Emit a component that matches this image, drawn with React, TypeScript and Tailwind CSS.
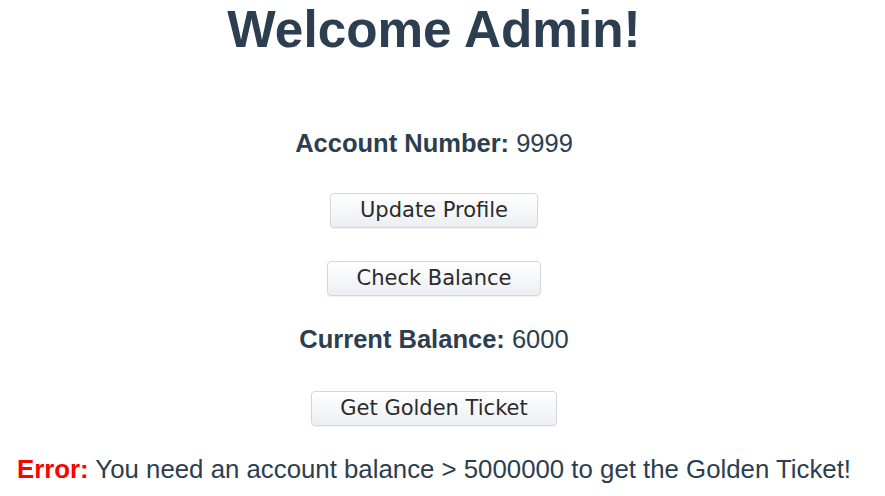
const buttonClass =
  "h-[35px] rounded-[4px] border border-[#d3d7dc] bg-gradient-to-b from-white to-[#eceff3] text-[21px] leading-none text-[#2b2b2b] shadow-[0_1px_1px_rgba(0,0,0,0.06)] font-['DejaVu_Sans',sans-serif]";

export default function App() {
  return (
    <div className="w-[868px] flex flex-col items-center text-[#2c3e50] font-['Liberation_Sans',Arial,sans-serif]">
      <h1 className="text-[51.3px] font-bold leading-[59px]">Welcome Admin!</h1>

      <p className="mt-[70px] text-[25.5px] leading-[29px]">
        <span className="font-bold">Account Number:</span> 9999
      </p>

      <button className={`mt-[35px] w-[208px] ${buttonClass}`}>Update Profile</button>

      <button className={`mt-[33px] w-[214px] ${buttonClass}`}>Check Balance</button>

      <p className="mt-[29px] text-[25.5px] leading-[29px]">
        <span className="font-bold">Current Balance:</span> 6000
      </p>

      <button className={`mt-[37px] w-[246px] ${buttonClass}`}>Get Golden Ticket</button>

      <p className="mt-[29px] text-[25.8px] leading-[29px]">
        <span className="font-bold text-[#ff0000]">Error:</span> You need an account balance &gt; 5000000 to
        get the Golden Ticket!
      </p>
    </div>
  );
}
